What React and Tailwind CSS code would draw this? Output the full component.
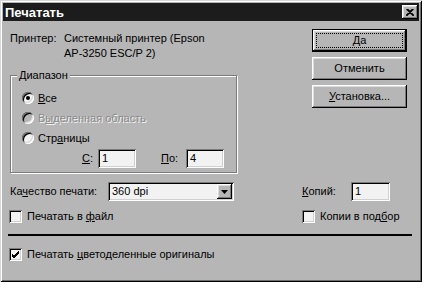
import React from 'react';

const raised =
  'shadow-[inset_-1px_-1px_0_#000,inset_1px_1px_0_#fff,inset_-2px_-2px_0_#7b7b7b,inset_2px_2px_0_#dcdcdc]';
const sunken =
  'shadow-[inset_1px_1px_0_#7b7b7b,inset_-1px_-1px_0_#fff,inset_2px_2px_0_#000,inset_-2px_-2px_0_#d0d0d0]';

const Button = ({ children, isDefault }) => (
  <div
    className={`w-[95px] h-[23px] flex items-center justify-center ${isDefault ? 'border border-black' : ''}`}
  >
    <div className={`relative w-full h-full flex items-center justify-center bg-[#b6b6b6] ${raised}`}>
      {isDefault && (
        <div className="absolute inset-[3px] border border-dotted border-black" />
      )}
      <span className="relative">{children}</span>
    </div>
  </div>
);

const Radio = ({ checked, disabled, children }) => (
  <div className="flex items-center h-[20px] pl-[11px]">
    <div
      className={`w-[12px] h-[12px] rounded-full flex items-center justify-center shadow-[inset_1px_1px_0_#7b7b7b,inset_-1px_-1px_0_#fff,inset_2px_2px_0_#000,inset_-2px_-2px_0_#d8d8d8] ${disabled ? 'bg-[#b6b6b6]' : 'bg-[#f2f2f2]'}`}
    >
      {checked && <div className="w-[4px] h-[4px] rounded-full bg-black" />}
    </div>
    <span
      className={`ml-[4px] ${disabled ? 'text-[#8a8a8a] [text-shadow:1px_1px_0_#f4f4f4]' : ''}`}
    >
      {children}
    </span>
  </div>
);

const Checkbox = ({ checked, children }) => (
  <div className="flex items-center h-[13px]">
    <div className={`w-[13px] h-[13px] shrink-0 bg-[#f2f2f2] flex items-center justify-center ${sunken}`}>
      {checked && (
        <svg width="9" height="9" viewBox="0 0 9 9">
          <path d="M1 4 L3 6 L8 1 M1 5 L3 7 L8 2 M1 6 L3 8 L8 3" stroke="#000" strokeWidth="1" fill="none" />
        </svg>
      )}
    </div>
    <span className="ml-[5px] leading-[13px]">{children}</span>
  </div>
);

const Field = ({ value, className }) => (
  <div className={`h-[19px] shrink-0 bg-[#f2f2f2] flex items-center pl-[4px] ${sunken} ${className}`}>
    {value}
  </div>
);

export default function App() {
  return (
    <div
      className="w-[422px] h-[282px] bg-[#b6b6b6] p-[3px] text-[11px] leading-[15px] text-black shadow-[inset_1px_1px_0_#d8d8d8,inset_-1px_-1px_0_#000,inset_2px_2px_0_#fff,inset_-2px_-2px_0_#6e6e6e]"
      style={{ fontFamily: '"Liberation Sans", Arial, sans-serif' }}
    >
      {/* Title bar */}
      <div className="h-[18px] bg-[#1c1c1c] flex items-center justify-between pl-[2px] pr-[1px]">
        <span className="text-white font-bold text-[13px]">Печатать</span>
        <div className={`w-[16px] h-[14px] bg-[#b6b6b6] flex items-center justify-center ${raised}`}>
          <svg width="8" height="7" viewBox="0 0 8 7">
            <path d="M0.5 0 L7.5 7 M1.5 0 L8 6.5 M7.5 0 L0.5 7 M6.5 0 L0 6.5" stroke="#000" strokeWidth="1.2" />
          </svg>
        </div>
      </div>

      <div className="px-[7px]">
        <div className="flex">
          {/* Left column */}
          <div className="w-[227px] shrink-0">
            <div className="flex mt-[10px]">
              <span className="w-[54px] shrink-0">Принтер:</span>
              <span>
                Системный принтер (Epson
                <br />
                AP-3250 ESC/P 2)
              </span>
            </div>

            <div className="relative mt-[14px] h-[98px] border border-[#7b7b7b] shadow-[1px_1px_0_#fff,inset_1px_1px_0_#fff] pt-[12px]">
              <span className="absolute -top-[8px] left-[6px] bg-[#b6b6b6] px-[2px]">Диапазон</span>
              <Radio checked>
                <u>В</u>се
              </Radio>
              <Radio disabled>
                В<u>ы</u>деленная область
              </Radio>
              <Radio>
                Стр<u>а</u>ницы
              </Radio>
              <div className="flex items-center mt-[1px]">
                <span className="ml-[71px] w-[16px] shrink-0">
                  <u>С</u>:
                </span>
                <Field value="1" className="w-[38px]" />
                <span className="ml-[25px] w-[25px] shrink-0">
                  <u>П</u>о:
                </span>
                <Field value="4" className="w-[38px]" />
              </div>
            </div>
          </div>

          {/* Buttons */}
          <div className="ml-[75px] mt-[8px] flex flex-col gap-[5px]">
            <Button isDefault>Да</Button>
            <Button>Отменить</Button>
            <Button>
              <u>У</u>становка...
            </Button>
          </div>
        </div>

        {/* Quality / copies */}
        <div className="flex items-center h-[19px] mt-[9px]">
          <span className="w-[98px] shrink-0">
            Ка<u>ч</u>ество печати:
          </span>
          <div className={`w-[126px] h-[19px] shrink-0 bg-[#f2f2f2] flex items-center pl-[4px] pr-[2px] ${sunken}`}>
            <span className="flex-1">360 dpi</span>
            <div className={`w-[15px] h-[15px] bg-[#b6b6b6] flex items-center justify-center ${raised}`}>
              <svg width="7" height="4" viewBox="0 0 7 4">
                <path d="M0 0 H7 L3.5 4 Z" fill="#000" />
              </svg>
            </div>
          </div>
          <span className="ml-[68px] w-[49px] shrink-0">
            <u>К</u>опий:
          </span>
          <Field value="1" className="w-[39px]" />
        </div>

        {/* Checkboxes */}
        <div className="flex items-center mt-[9px] -ml-[1px]">
          <div className="w-[293px] shrink-0">
            <Checkbox>
              Печатать в <u>ф</u>айл
            </Checkbox>
          </div>
          <Checkbox>
            Копии в под<u>б</u>ор
          </Checkbox>
        </div>

        <div className="mt-[11px] -ml-[2px] w-[404px] h-[2px] bg-black" />

        <div className="mt-[12px] -ml-[1px]">
          <Checkbox checked>
            Печатать <u>ц</u>ветоделенные оригиналы
          </Checkbox>
        </div>
      </div>
    </div>
  );
}
